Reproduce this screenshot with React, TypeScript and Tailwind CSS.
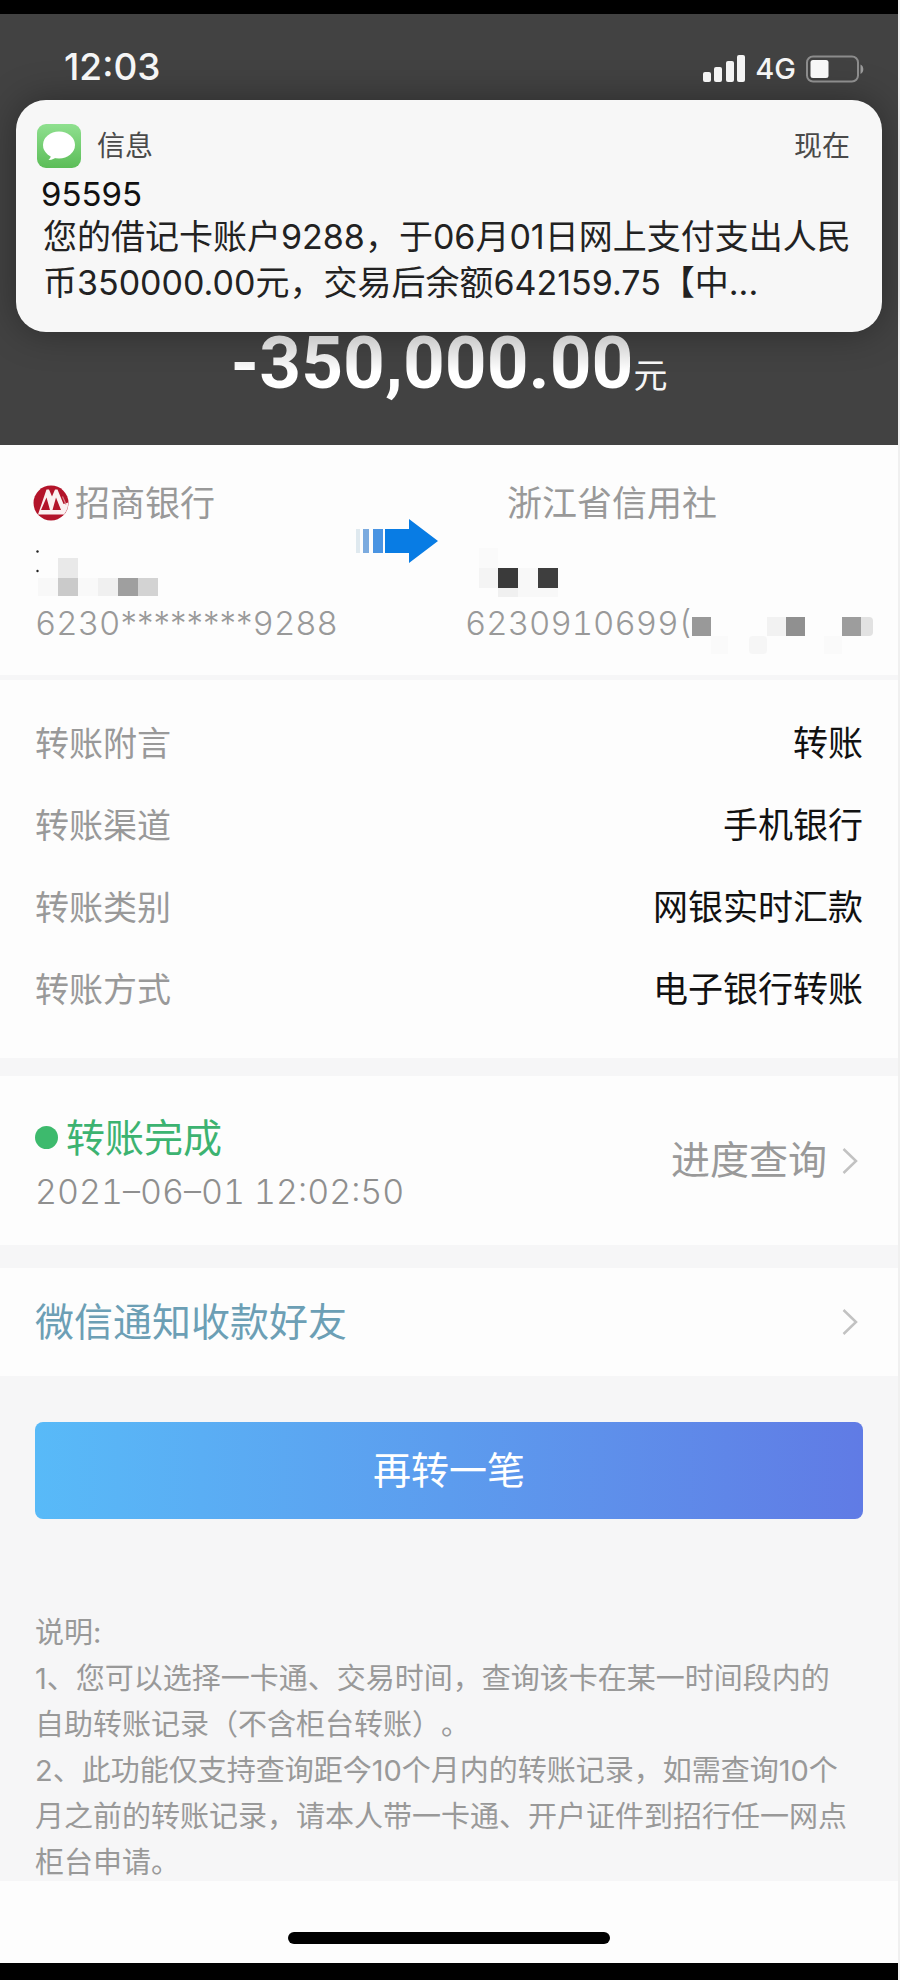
import type { ReactNode } from "react";

const details = [
  { label: "转账附言", value: "转账" },
  { label: "转账渠道", value: "手机银行" },
  { label: "转账类别", value: "网银实时汇款" },
  { label: "转账方式", value: "电子银行转账" },
];

function SignalIcon() {
  return (
    <svg width="42" height="28" viewBox="0 0 42 28" fill="#f4f4f4" aria-hidden="true">
      <rect x="0" y="17" width="8" height="10" rx="2" />
      <rect x="11" y="12" width="8" height="15" rx="2" />
      <rect x="23" y="6" width="8" height="21" rx="2" />
      <rect x="34" y="0" width="8" height="27" rx="2" />
    </svg>
  );
}

function BatteryIcon() {
  return (
    <svg width="60" height="28" viewBox="0 0 60 28" aria-hidden="true">
      <rect x="1" y="1.5" width="51" height="25" rx="6" fill="none" stroke="#8c8c8c" strokeWidth="2" />
      <rect x="4.5" y="5" width="18" height="18" rx="2.5" fill="#f8f8f8" />
      <path d="M54.5 9.5c3.5 1.500 4 7.500 0 9.500z" fill="#9a9a9a" />
    </svg>
  );
}

function MessagesIcon() {
  return (
    <svg width="44" height="44" viewBox="0 0 44 44" aria-hidden="true">
      <defs>
        <linearGradient id="messages-fill" x1="0" y1="0" x2="0" y2="1">
          <stop offset="0" stopColor="#8fe08f" />
          <stop offset="1" stopColor="#5cbd58" />
        </linearGradient>
      </defs>
      <rect width="44" height="44" rx="9" fill="url(#messages-fill)" />
      <ellipse cx="22" cy="21" rx="16" ry="13.500" fill="#fff" />
      <path d="M14 29c.5 3-.5 5-2.500 7 4-.2 7-1.500 9-4z" fill="#fff" />
    </svg>
  );
}

function BankLogo() {
  return (
    <svg width="36" height="36" viewBox="0 0 36 36" aria-hidden="true">
      <circle cx="18" cy="18" r="17.500" fill="#b3142a" />
      <path
        d="M5 29.500 13.500 4.500h2.500l3 7 3-7h2.500L30.500 19l4.700-1.500a17.500 17.500 0 0 1-3.500 11L31 29.500z"
        fill="#fbf1f1"
      />
      <path d="M8 25 13.500 12.500 17 25zM19.500 25 23 12.500 28 25z" fill="#b3142a" />
      <path d="M29.500 11.500 33 19.500" stroke="#d9858c" strokeWidth="1.200" />
    </svg>
  );
}

function TransferArrow() {
  return (
    <svg width="84" height="44" viewBox="0 0 84 44" aria-hidden="true">
      <rect x="1" y="10" width="4" height="24" fill="#dfe9ef" />
      <rect x="8" y="10" width="6" height="24" fill="#7cabdf" />
      <rect x="18" y="10" width="10" height="24" fill="#4a94e2" />
      <path d="M30 10h24V0l29 22-29 22V34H30z" fill="#087ce4" />
    </svg>
  );
}

function Chevron() {
  return (
    <svg width="18" height="28" viewBox="0 0 18 28" fill="none" stroke="#c2c2c2" strokeWidth="2.500" aria-hidden="true">
      <path d="M2.500 2 15 14 2.500 26" />
    </svg>
  );
}

function SenderNameMask() {
  return (
    <svg width="124" height="46" viewBox="0 0 124 46" aria-hidden="true">
      <circle cx="2.500" cy="1.500" r="1.200" fill="#222" />
      <circle cx="2.500" cy="21" r="1.200" fill="#222" />
      <rect x="23" y="8" width="20" height="20" fill="#e9e9e9" />
      <rect x="3" y="28" width="20" height="18" fill="#f8f8f8" />
      <rect x="23" y="28" width="20" height="18" fill="#cacaca" />
      <rect x="43" y="28" width="20" height="18" fill="#f9f9f9" />
      <rect x="63" y="28" width="20" height="18" fill="#f0f0f0" />
      <rect x="83" y="28" width="20" height="18" fill="#9f9f9f" />
      <rect x="103" y="28" width="20" height="18" fill="#d3d3d3" />
    </svg>
  );
}

function PayeeNameMask() {
  return (
    <svg width="96" height="50" viewBox="0 0 96 50" aria-hidden="true">
      <rect x="14" y="0" width="19" height="20" fill="#fafafa" />
      <rect x="14" y="20" width="19" height="20" fill="#f4f4f4" />
      <rect x="33" y="20" width="20" height="20" fill="#3a3a3a" />
      <rect x="53" y="20" width="20" height="20" fill="#f8f8f8" />
      <rect x="73" y="20" width="20" height="20" fill="#3e3e3e" />
      <rect x="33" y="40" width="20" height="9" fill="#f0f0f0" />
      <rect x="53" y="40" width="40" height="9" fill="#f8f8f8" />
    </svg>
  );
}

function PayeeAccountMask() {
  return (
    <svg width="190" height="40" viewBox="0 0 190 40" aria-hidden="true">
      <rect x="9" y="1" width="19" height="19" fill="#999" />
      <rect x="84" y="1" width="19" height="19" fill="#f2f2f2" />
      <rect x="103" y="1" width="19" height="19" fill="#909090" />
      <rect x="159" y="1" width="19" height="19" fill="#9d9d9d" />
      <path d="M178 1h8q4 0 4 4v11q0 4-4 4h-8z" fill="#e2e2e2" />
      <rect x="28" y="20" width="17" height="18" fill="#fafafa" />
      <rect x="66" y="20" width="18" height="18" rx="4" fill="#f6f6f6" />
      <rect x="141" y="20" width="18" height="18" fill="#fafafa" />
    </svg>
  );
}

function StatusBar() {
  return (
    <div className="flex h-[86px] items-center justify-between pt-5 pr-8 pl-16 text-[#f5f5f5]">
      <time className="text-[37px] font-medium">12:03</time>
      <div className="flex items-center gap-2.5 pt-1">
        <SignalIcon />
        <span className="text-[29px] font-medium">4G</span>
        <BatteryIcon />
      </div>
    </div>
  );
}

function Notification() {
  return (
    <section className="mx-4 rounded-[30px] bg-[#f7f7f7] pt-6 pr-7 pb-[26px] pl-[21px] text-[#111] shadow-[0_0_36px_rgba(0,0,0,0.35)]">
      <div className="flex items-center text-[28px] text-[#4a4a4a]">
        <MessagesIcon />
        <span className="ml-4">信息</span>
        <span className="ml-auto pr-1">现在</span>
      </div>
      <h2 className="mt-1.5 ml-1 text-[33px] leading-[40px]">95595</h2>
      <p className="ml-1.5 text-[34px] leading-[46px] text-[#222]">
        您的借记卡账户9288，于06月01日网上支付支出人民币350000.00元，交易后余额642159.75【中...
      </p>
    </section>
  );
}

function Band({ children }: { children: ReactNode }) {
  return <section className="bg-[#fdfdfd] px-[35px]">{children}</section>;
}

export default function App() {
  return (
    <div className="bg-[#f0f0f0] pr-0.5 font-['Inter','Noto_Sans_CJK_SC',sans-serif]" lang="zh-CN">
      <div className="bg-[#f6f6f7]">
        <div className="h-3.5 bg-black" />

        <header className="bg-[#424242]">
          <StatusBar />
          <Notification />
          <div className="h-[113px] text-center leading-[62px] text-[#f5f5f5]">
            <span className="bg-linear-to-b from-[#cccccc] from-20% to-white to-60% bg-clip-text font-['Roboto'] text-[73px] font-bold text-transparent">
              -350,000.00
            </span>
            <span className="text-[34px]">元</span>
          </div>
        </header>

        <Band>
          <div className="flex items-start pt-[35px] pb-[26px] text-[#999]">
            <div className="w-[320px] shrink-0">
              <div className="-ml-0.5 flex items-center gap-1.5 text-[35px] leading-[46px]">
                <BankLogo />
                <span>招商银行</span>
              </div>
              <div className="flex h-[74px] items-start pt-6">
                <SenderNameMask />
              </div>
              <div className="text-[33px] leading-[46px] font-light tabular-nums">
                6230<span className="normal-nums">********</span>9288
              </div>
            </div>
            <div className="pt-[39px]">
              <TransferArrow />
            </div>
            <div className="ml-[26px]">
              <div className="pl-[42px] text-[35px] leading-[46px]">浙江省信用社</div>
              <div className="flex h-[74px] items-start pt-[22px]">
                <PayeeNameMask />
              </div>
              <div className="flex h-[49px] items-start text-[33px] leading-[46px] font-light tabular-nums">
                <span>6230910699(</span>
                <span className="-ml-2 pt-4">
                  <PayeeAccountMask />
                </span>
              </div>
            </div>
          </div>
        </Band>
        <div className="h-[5px]" />

        <Band>
          <dl className="pt-[22px] pb-7">
            {details.map((row) => (
              <div key={row.label} className="flex h-[82px] items-center justify-between">
                <dt className="text-[34px] text-[#999]">{row.label}</dt>
                <dd className="text-[35px] text-[#111]">{row.value}</dd>
              </div>
            ))}
          </dl>
        </Band>
        <div className="h-[18px]" />

        <Band>
          <div className="flex h-[169px] items-center justify-between">
            <div className="pt-2">
              <div className="flex items-center gap-2 text-[39px] leading-[54px] text-[#3cb371]">
                <span className="size-[23px] rounded-full bg-[#3dba6d]" />
                转账完成
              </div>
              <div className="text-[34px] leading-[54px] font-light text-[#8f8f8f] tabular-nums">
                2021–06–01 12:02:50
              </div>
            </div>
            <button type="button" className="flex items-center gap-3.5 pr-1 text-[39px] text-[#999]">
              进度查询
              <Chevron />
            </button>
          </div>
        </Band>
        <div className="h-[23px]" />

        <Band>
          <a href="#notify" className="flex h-[108px] items-center justify-between pr-1 text-[39px] text-[#6c9fb5]">
            微信通知收款好友
            <Chevron />
          </a>
        </Band>

        <div className="px-[35px] pt-[46px]">
          <button
            type="button"
            className="h-[97px] w-full rounded-lg bg-linear-to-r from-[#58baf8] via-[#5c9cee] to-[#607be5] text-[38px] text-white"
          >
            再转一笔
          </button>
        </div>

        <section className="pt-[91px] pr-10 pl-[35px] text-[29px] leading-[46px] text-[#999] [text-spacing-trim:space-all]">
          <h3>说明:</h3>
          <p>1、您可以选择一卡通、交易时间，查询该卡在某一时间段内的自助转账记录（不含柜台转账）。</p>
          <p>2、此功能仅支持查询距今10个月内的转账记录，如需查询10个月之前的转账记录，请本人带一卡通、开户证件到招行任一网点柜台申请。</p>
        </section>

        <footer className="-mt-[5px] flex h-[82px] justify-center bg-[#fdfdfd] pt-[51px]">
          <div className="h-3 w-[322px] rounded-full bg-black" />
        </footer>
        <div className="h-[17px] bg-black" />
      </div>
    </div>
  );
}
